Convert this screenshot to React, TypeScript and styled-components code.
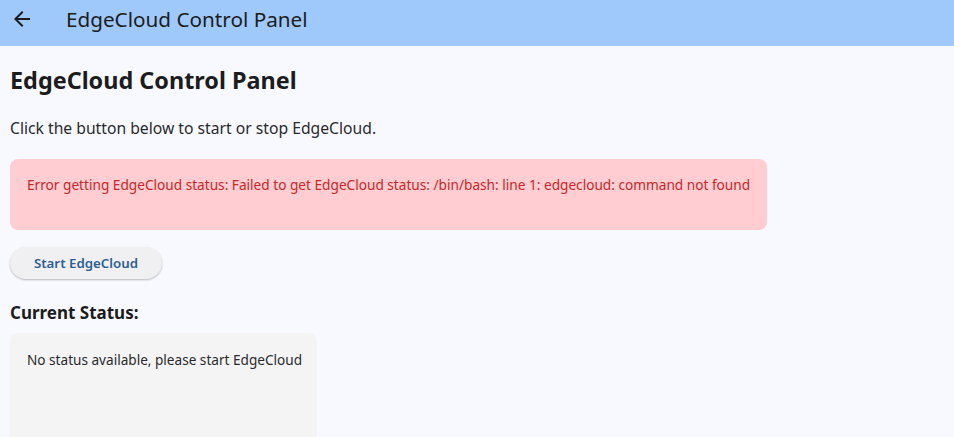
import React from "react";
import styled, { createGlobalStyle } from "styled-components";

const Global = createGlobalStyle`
  html, body { margin: 0; padding: 0; background: #f8f9fe; }
  body { font-family: "Noto Sans", "Open Sans", sans-serif; color: #1c1c20; }
`;

const Page = styled.div`
  min-height: 437px;
  background: #f8f9fe;
`;

const AppBar = styled.header`
  height: 46px;
  background: #9fc9fb;
  display: flex;
  align-items: center;
  padding-left: 10px;
  gap: 32px;
`;

const BackButton = styled.button`
  width: 24px;
  height: 24px;
  padding: 0;
  border: none;
  background: transparent;
  display: flex;
  align-items: center;
  justify-content: center;
  color: #1c1c20;
  margin-top: -8px;
`;

const BarTitle = styled.h1`
  margin: 0 0 8px 0;
  font-size: 20.7px;
  font-weight: 400;
  color: #1c1c20;
`;

const Content = styled.main`
  padding: 0 10px;
  display: flex;
  flex-direction: column;
`;

const Heading = styled.h2`
  margin: 19px 0 0 0;
  font-size: 23.4px;
  line-height: 30px;
  font-weight: 700;
`;

const Lead = styled.p`
  margin: 22px 0 0 0;
  font-size: 15.7px;
  line-height: 22px;
  color: #2a2a2e;
`;

const ErrorBox = styled.div`
  margin-top: 20px;
  width: 757px;
  height: 71px;
  box-sizing: border-box;
  background: #ffcdd2;
  border-radius: 8px;
  padding: 17px 17px;
  color: #c62828;
  font-size: 13.65px;
  line-height: 18px;
  white-space: nowrap;
`;

const PillButton = styled.button`
  margin-top: 17px;
  align-self: flex-start;
  width: 152px;
  height: 32px;
  border: none;
  border-radius: 16px;
  background: #f0f0f2;
  box-shadow: 0 1px 2px rgba(0, 0, 0, 0.25);
  color: #2f5f91;
  font-family: inherit;
  font-size: 13.3px;
  font-weight: 600;
`;

const SubHeading = styled.h3`
  margin: 22px 0 0 0;
  font-size: 17px;
  line-height: 24px;
  font-weight: 700;
`;

const StatusBox = styled.div`
  margin-top: 8px;
  width: 307px;
  height: 120px;
  box-sizing: border-box;
  background: #f4f4f4;
  border-radius: 8px;
  padding: 18px 17px;
  font-size: 13.6px;
  line-height: 18px;
  color: #2a2a2e;
  white-space: nowrap;
`;

export default function App() {
  return (
    <Page>
      <Global />
      <AppBar>
        <BackButton aria-label="Back">
          <svg width="24" height="24" viewBox="0 0 24 24">
            <path d="M20 11H7.83l5.59-5.59L12 4l-8 8 8 8 1.41-1.41L7.83 13H20v-2z" fill="currentColor" />
          </svg>
        </BackButton>
        <BarTitle>EdgeCloud Control Panel</BarTitle>
      </AppBar>
      <Content>
        <Heading>EdgeCloud Control Panel</Heading>
        <Lead>Click the button below to start or stop EdgeCloud.</Lead>
        <ErrorBox>
          Error getting EdgeCloud status: Failed to get EdgeCloud status: /bin/bash: line 1: edgecloud: command not found
        </ErrorBox>
        <PillButton>Start EdgeCloud</PillButton>
        <SubHeading>Current Status:</SubHeading>
        <StatusBox>No status available, please start EdgeCloud</StatusBox>
      </Content>
    </Page>
  );
}
